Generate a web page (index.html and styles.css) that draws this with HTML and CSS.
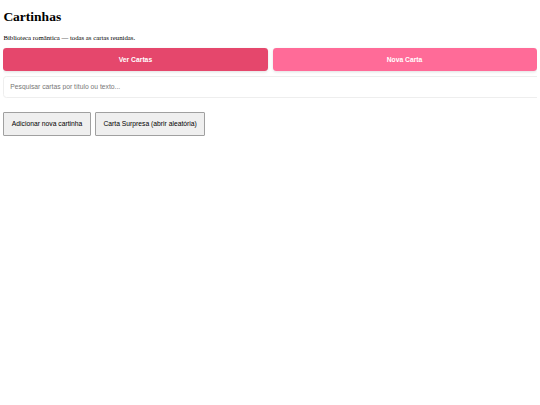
FILE: index.html
```html
<!DOCTYPE html>
<html lang="pt">
<head>
<meta charset="utf-8">
<title>Cartinhas</title>
<link rel="stylesheet" href="styles.css">
</head>
<body>
<h1 class="title">Cartinhas</h1>
<p class="subtitle">Biblioteca romântica — todas as cartas reunidas.</p>
<nav class="tabs">
  <button class="tab tab-view">Ver Cartas</button>
  <button class="tab tab-new">Nova Carta</button>
</nav>
<input class="search" type="text" placeholder="Pesquisar cartas por título ou texto...">
<div class="actions">
  <button class="action">Adicionar nova cartinha</button>
  <button class="action">Carta Surpresa (abrir aleatória)</button>
</div>
</body>
</html>
```

FILE: styles.css
```css
html {
  background: #ffffff;
  overflow: hidden;
}
body {
  margin: 3.375px;
  font-family: "Liberation Serif", "Times New Roman", serif;
  color: #000;
}
.title {
  font-size: 13.5px;
  font-weight: bold;
  margin: 6px 0 9px;
  line-height: 15.5px;
}
.subtitle {
  font-size: 6.75px;
  line-height: 7.8px;
  margin: 6.75px 0 6.4px;
}
.tabs {
  display: flex;
  gap: 5px;
}
.tab {
  flex: 1;
  height: 22.5px;
  border: none;
  border-radius: 3.4px;
  color: #fff;
  font-family: "Liberation Sans", Arial, sans-serif;
  font-weight: bold;
  font-size: 6.75px;
  box-shadow: 0 1px 3px rgba(0, 0, 0, 0.12);
  padding: 0;
}
.tab-view {
  background: #e5476c;
}
.tab-new {
  background: #ff6b98;
}
.search {
  display: block;
  width: 100%;
  height: 20px;
  margin-top: 5px;
  padding: 0 5.9px;
  box-sizing: content-box;
  border: 1px solid #eeeeee;
  border-radius: 3.4px;
  font-family: "Liberation Sans", Arial, sans-serif;
  font-size: 6.75px;
  color: #333;
  outline: none;
}
.search::placeholder {
  color: #777;
}
.actions {
  display: flex;
  gap: 4.3px;
  margin-top: 14px;
}
.action {
  height: 24.4px;
  padding: 0 7.4px;
  background: #efefef;
  border: 1px solid #a0a0a0;
  border-radius: 1px;
  font-family: "Liberation Sans", Arial, sans-serif;
  font-size: 6.75px;
  color: #000;
}
```
